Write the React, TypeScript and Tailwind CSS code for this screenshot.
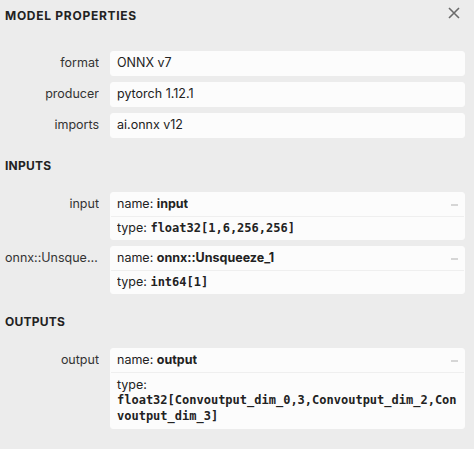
import React from "react";

const sans = { fontFamily: "Inter, 'Noto Sans', sans-serif" };

function Minus() {
  return <div className="w-[7px] h-[2px] bg-[#d6d6d6] shrink-0" />;
}

function Row({ label, children }: { label: string; children: React.ReactNode }) {
  return (
    <div className="flex items-start gap-[11px]">
      <div className="w-[94px] shrink-0 text-right truncate leading-[24px] text-[12.5px] text-[#333]">{label}</div>
      <div className="flex-1 min-w-0 bg-[#fcfcfc] border border-[#fcfcfc] rounded-[3px] text-[12.5px] text-[#222]">
        {children}
      </div>
    </div>
  );
}

function Line({ children, border, minus }: { children: React.ReactNode; border?: boolean; minus?: boolean }) {
  return (
    <div className={`h-[23px] px-[6px] flex items-center justify-between ${border ? "border-t border-[#efefef]" : ""}`}>
      <div className="truncate">{children}</div>
      {minus && <Minus />}
    </div>
  );
}

const mono = "font-['DejaVu_Sans_Mono',monospace] font-bold text-[12px]";

export default function App() {
  return (
    <div className="w-[474px] h-[449px] bg-[#ececec] overflow-hidden text-[#333]" style={sans}>
      <div className="flex items-start justify-between pl-[5px] pr-[14px] pt-[8px]">
        <div className="text-[12px] font-bold leading-[15px] tracking-[0.06em] text-[#222]">MODEL PROPERTIES</div>
        <svg width="12" height="12" viewBox="0 0 12 12" className="mt-[-1px]">
          <path d="M1 1 L11 11 M11 1 L1 11" stroke="#6b6b6b" strokeWidth="1.6" />
        </svg>
      </div>

      <div className="pl-[5px] pr-[9px] pt-[28px] flex flex-col gap-[6px]">
        <Row label="format"><Line>ONNX v7</Line></Row>
        <Row label="producer"><Line>pytorch 1.12.1</Line></Row>
        <Row label="imports"><Line>ai.onnx v12</Line></Row>
      </div>

      <div className="pl-[5px] mt-[20px] text-[12px] font-bold leading-[15px] tracking-[0.02em] text-[#222]">INPUTS</div>

      <div className="pl-[5px] pr-[9px] mt-[19px] flex flex-col gap-[6px]">
        <Row label="input">
          <Line minus>name: <span className="font-bold">input</span></Line>
          <Line border>type: <span className={mono}>float32[1,6,256,256]</span></Line>
        </Row>
        <Row label="onnx::Unsqueeze_1">
          <Line minus>name: <span className="font-bold">onnx::Unsqueeze_1</span></Line>
          <Line border>type: <span className={mono}>int64[1]</span></Line>
        </Row>
      </div>

      <div className="pl-[5px] mt-[20px] text-[12px] font-bold leading-[15px] tracking-[0.02em] text-[#222]">OUTPUTS</div>

      <div className="pl-[5px] pr-[9px] mt-[19px] flex flex-col gap-[6px]">
        <Row label="output">
          <Line minus>name: <span className="font-bold">output</span></Line>
          <div className="border-t border-[#efefef] px-[6px] pt-[5px] pb-[4px] leading-[16px]">
            <div className="leading-[14px]">type:</div>
            <div className={`${mono} break-all`}>float32[Convoutput_dim_0,3,Convoutput_dim_2,Convoutput_dim_3]</div>
          </div>
        </Row>
      </div>
    </div>
  );
}
